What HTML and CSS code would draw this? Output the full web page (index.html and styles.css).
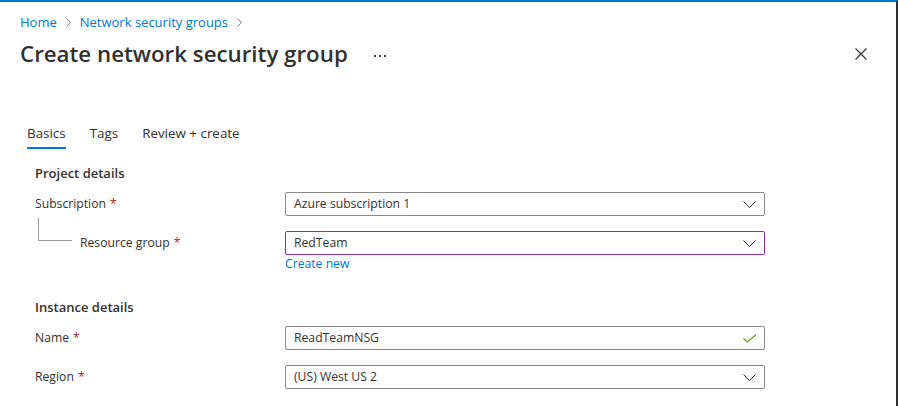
FILE: index.html
```html
<!DOCTYPE html>
<html lang="en">
<head>
<meta charset="utf-8">
<title>Create network security group</title>
<link rel="stylesheet" href="styles.css">
</head>
<body>
<div class="blade">
  <nav class="breadcrumb">
    <a class="crumb" href="#">Home</a>
    <svg class="crumb-sep" width="6" height="9" viewBox="0 0 6 9"><polyline points="0.5,0.5 4.5,4.5 0.5,8.5" fill="none" stroke="#8a8886" stroke-width="1"/></svg>
    <a class="crumb" href="#">Network security groups</a>
    <svg class="crumb-sep" width="6" height="9" viewBox="0 0 6 9"><polyline points="0.5,0.5 4.5,4.5 0.5,8.5" fill="none" stroke="#8a8886" stroke-width="1"/></svg>
  </nav>
  <div class="title-row">
    <h1 class="title">Create network security group</h1>
    <div class="more"><span class="dot"></span><span class="dot"></span><span class="dot"></span></div>
    <div class="spacer"></div>
    <svg class="close" width="12" height="12" viewBox="0 0 12 12"><path d="M0.5 0.5 L11.5 11.5 M11.5 0.5 L0.5 11.5" stroke="#323130" stroke-width="1.1" fill="none"/></svg>
  </div>

  <div class="tabs">
    <div class="tab active">Basics</div>
    <div class="tab">Tags</div>
    <div class="tab">Review + create</div>
  </div>

  <div class="form">
    <h2 class="section">Project details</h2>
    <div class="row">
      <div class="label">Subscription <span class="req">*</span></div>
      <div class="control">
        <div class="field">Azure subscription 1
          <svg class="chev" width="13" height="7" viewBox="0 0 13 7"><polyline points="0.5,0.5 6.5,6.5 12.5,0.5" fill="none" stroke="#323130" stroke-width="1"/></svg>
        </div>
      </div>
    </div>
    <div class="row row-gap">
      <div class="label nested"><span class="tree"></span>Resource group <span class="req">*</span></div>
      <div class="control">
        <div class="field focus">RedTeam
          <svg class="chev" width="13" height="7" viewBox="0 0 13 7"><polyline points="0.5,0.5 6.5,6.5 12.5,0.5" fill="none" stroke="#323130" stroke-width="1"/></svg>
        </div>
      </div>
    </div>
    <div class="row">
      <div class="label"></div>
      <a class="link" href="#">Create new</a>
    </div>

    <h2 class="section section-2">Instance details</h2>
    <div class="row">
      <div class="label">Name <span class="req">*</span></div>
      <div class="control">
        <div class="field">ReadTeamNSG
          <svg class="check" width="14" height="9" viewBox="0 0 14 9"><polyline points="0.5,4.5 4.5,8 13,0.5" fill="none" stroke="#57a300" stroke-width="1.1"/></svg>
        </div>
      </div>
    </div>
    <div class="row row-gap">
      <div class="label">Region <span class="req">*</span></div>
      <div class="control">
        <div class="field">(US) West US 2
          <svg class="chev" width="13" height="7" viewBox="0 0 13 7"><polyline points="0.5,0.5 6.5,6.5 12.5,0.5" fill="none" stroke="#323130" stroke-width="1"/></svg>
        </div>
      </div>
    </div>
  </div>
</div>
</body>
</html>
```

FILE: styles.css
```css
* { box-sizing: border-box; }
html, body {
  margin: 0;
  padding: 0;
  background: #ffffff;
}
body {
  width: 898px;
  height: 406px;
  overflow: hidden;
  font-family: "Open Sans", "Noto Sans", sans-serif;
  font-size: 12.2px;
  color: #323130;
}
.blade {
  width: 898px;
  height: 406px;
  border-top: 2px solid #0078d4;
  border-right: 2px solid #2f2f2f;
}
.breadcrumb {
  display: flex;
  align-items: center;
  height: 20px;
  margin-top: 10px;
  padding-left: 20px;
  font-size: 13px;
  line-height: 20px;
}
.crumb {
  color: #0078d4;
  text-decoration: none;
}
.crumb-sep {
  margin: 0 8px 0 9px;
}
.title-row {
  display: flex;
  align-items: center;
  height: 32px;
  margin-top: 6px;
  padding-left: 20px;
  padding-right: 29px;
}
.title {
  margin: 0;
  font-size: 22.3px;
  font-weight: 600;
  line-height: 32px;
  color: #323130;
}
.more {
  display: flex;
  gap: 3px;
  margin-left: 26px;
  margin-top: 3px;
}
.dot {
  width: 2px;
  height: 2px;
  background: #484644;
}
.spacer { flex: 1; }
.close { display: block; }

.tabs {
  display: flex;
  margin-top: 51px;
  padding-left: 27px;
}
.tab {
  margin-right: 24px;
  font-size: 13.4px;
  line-height: 24px;
  padding-bottom: 2px;
  border-bottom: 2px solid transparent;
  color: #323130;
}
.tab.active {
  border-bottom-color: #0078d4;
}

.form {
  padding-left: 35px;
}
.section {
  margin: 14px 0 9px 0;
  font-size: 13px;
  font-weight: 600;
  line-height: 20px;
  color: #323130;
}
.section-2 {
  margin-top: 24px;
}
.row {
  display: flex;
  align-items: center;
}
.row-gap {
  margin-top: 15px;
}
.label {
  width: 250px;
  flex: none;
  display: flex;
  align-items: center;
  line-height: 20px;
}
.label .req {
  color: #a4262c;
  margin-left: 4px;
}
.label.nested {
  align-self: stretch;
}
.tree {
  width: 34px;
  height: 23px;
  margin-left: 3px;
  margin-right: 8px;
  margin-top: -13px;
  align-self: flex-start;
  border-left: 1px solid #a19f9d;
  border-bottom: 1px solid #a19f9d;
  flex: none;
}
.control {
  width: 480px;
}
.field {
  display: flex;
  align-items: center;
  justify-content: space-between;
  height: 24px;
  padding: 0 8px;
  border: 1px solid #8a8886;
  border-radius: 2px;
  line-height: 20px;
  color: #323130;
}
.field.focus {
  border-color: #8b2fa8;
}
.chev { display: block; }
.check { display: block; margin-right: -1px; }
.link {
  color: #0078d4;
  text-decoration: none;
  line-height: 18px;
}
```
